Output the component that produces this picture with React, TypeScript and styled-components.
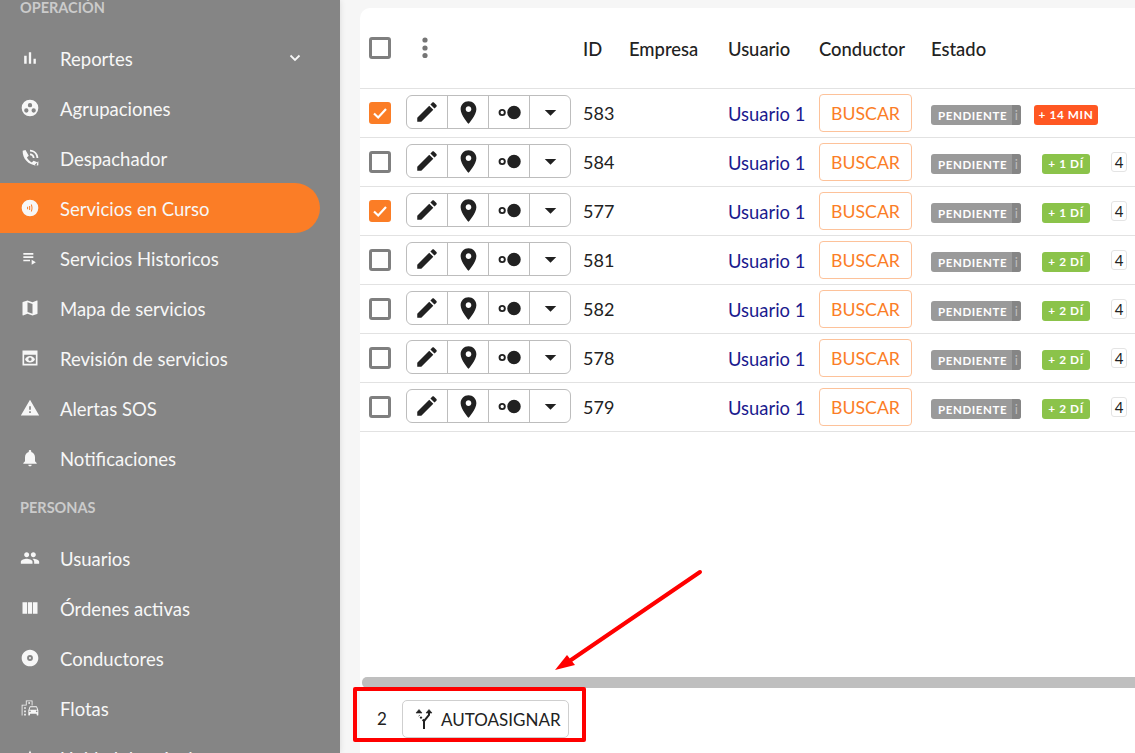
import { FC } from 'react';
import styled, { createGlobalStyle } from 'styled-components';

const FONT = '"Lato", "Noto Sans", sans-serif';

const GlobalStyle = createGlobalStyle`
  html, body {
    margin: 0;
    height: 100%;
    overflow: hidden;
    font-family: ${FONT};
  }
  * { box-sizing: border-box; }
`;

const Page = styled.div`
  position: relative;
  display: flex;
  width: 1135px;
  height: 753px;
  overflow: hidden;
  background: #f6f6f6;
`;

const Sidebar = styled.nav`
  flex: 0 0 340px;
  height: 100%;
  overflow: hidden;
  background: #858585;
  box-shadow: 0 0 6px rgba(0, 0, 0, 0.12);
`;

const SidebarList = styled.div`
  margin-top: -17px;
`;

const SectionLabel = styled.div`
  height: 50px;
  padding-left: 20px;
  line-height: 50px;
  font-size: 14.5px;
  font-weight: 700;
  color: #cbcbcb;
`;

const MenuItem = styled.div<{ $active?: boolean }>`
  display: flex;
  align-items: center;
  gap: 20px;
  width: 320px;
  height: 50px;
  padding: 0 18px 0 20px;
  border-radius: 0 25px 25px 0;
  color: #f7f7f7;
  font-size: 18.5px;
  background: ${p => (p.$active ? '#fb7d26' : 'transparent')};
  > span {
    flex: 1;
    padding-top: 2px;
  }
`;

const Main = styled.main`
  flex: 1;
  min-width: 0;
  padding: 8px 0 0 20px;
  display: flex;
`;

const Card = styled.section`
  flex: 1;
  min-width: 0;
  display: flex;
  flex-direction: column;
  background: #fff;
  border-radius: 10px 0 0 0;
  color: #222;
`;

const Row = styled.div<{ $head?: boolean }>`
  display: grid;
  grid-template-columns: 46px 177px 46px 99px 91px 112px 97px 76px 1fr;
  align-items: center;
  height: ${p => (p.$head ? '81px' : '49px')};
  border-bottom: 1px solid #e2e2e2;
  font-size: ${p => (p.$head ? '18.4px' : '18px')};
  font-weight: ${p => (p.$head ? 500 : 400)};
`;

const HeadLabel = styled.span`
  padding-top: 2px;
`;

const CheckCell = styled.div`
  padding-left: 9px;
  display: flex;
`;

const CheckBox = styled.div<{ $checked?: boolean }>`
  width: 22px;
  height: 22px;
  border-radius: 3px;
  border: 3px solid ${p => (p.$checked ? '#fb7d26' : '#7f7f7f')};
  background: ${p => (p.$checked ? '#fb7d26' : '#fff')};
  display: flex;
  align-items: center;
  justify-content: center;
`;

const ActionGroup = styled.div`
  display: flex;
  width: 165px;
  height: 34px;
  margin-top: -2px;
  border: 1px solid #bdbdbd;
  border-radius: 6px;
`;

const ActionCell = styled.div`
  flex: 1;
  display: flex;
  align-items: center;
  justify-content: center;
  border-left: 1px solid #bdbdbd;
  &:first-child { border-left: 0; }
`;

const DotsCell = styled.div`
  display: flex;
  justify-content: center;
  width: 38px;
`;

const UserLink = styled.span`
  color: #1a1a8e;
  font-size: 18.4px;
  padding-top: 2px;
`;

const SearchButton = styled.div`
  display: flex;
  align-items: center;
  justify-content: center;
  width: 93px;
  height: 38px;
  border: 1px solid #fdc29a;
  border-radius: 4px;
  color: #fb7d26;
  font-size: 17.7px;
`;

const StatusBadge = styled.div`
  display: flex;
  align-items: center;
  width: 90px;
  height: 20px;
  margin-top: 4px;
  padding-left: 7px;
  border-radius: 3px;
  background: #9a9a9a;
  color: #fff;
  font-size: 11.5px;
  font-weight: 700;
  letter-spacing: 0.6px;
  overflow: hidden;
  > span { flex: 1; }
`;

const InfoMark = styled.i`
  width: 9px;
  height: 100%;
  background: #858585;
  color: #bdbdbd;
  font-style: normal;
  font-size: 13px;
  font-weight: 400;
  line-height: 20px;
  text-align: center;
`;

const TimeCell = styled.div`
  display: flex;
  justify-content: center;
`;

const TimeBadge = styled.div<{ $late?: boolean }>`
  height: 20px;
  margin-top: 4px;
  padding: 0 ${p => (p.$late ? '5px' : '6px')};
  border-radius: 3px;
  background: ${p => (p.$late ? '#ff5722' : '#8bc34a')};
  color: #fff;
  font-size: 11.8px;
  font-weight: 700;
  letter-spacing: 0.6px;
  line-height: 20px;
  white-space: nowrap;
`;

const CountChip = styled.div`
  width: 16px;
  height: 20px;
  margin-left: 7px;
  border: 1px solid #e4e4e4;
  border-radius: 3px;
  font-size: 15px;
  line-height: 18px;
  text-align: center;
`;

const Spacer = styled.div`
  flex: 1;
`;

const ScrollBar = styled.div`
  flex: 0 0 11px;
  margin-left: 2px;
  border-radius: 5px 0 0 5px;
  background: #bfbfbf;
`;

const Footer = styled.footer`
  flex: 0 0 65px;
  display: flex;
  align-items: flex-start;
  padding: 12px 0 0 17px;
  gap: 16px;
  font-size: 17px;
`;

const SelectedCount = styled.span`
  width: 9px;
  line-height: 38px;
`;

const AssignButton = styled.div`
  display: flex;
  align-items: center;
  gap: 6px;
  width: 167px;
  height: 38px;
  padding-left: 10px;
  border: 1px solid #cfcfcf;
  border-radius: 5px;
  font-size: 17px;
`;

const Highlight = styled.div`
  position: absolute;
  left: 353px;
  top: 687px;
  width: 233px;
  height: 55px;
  border: 4px solid #f00;
  border-radius: 2px;
`;

const ArrowLayer = styled.svg`
  position: absolute;
  left: 0;
  top: 0;
  pointer-events: none;
`;

const Glyph: FC<{ d: string; size?: number; color?: string }> = ({ d, size = 20, color = '#f7f7f7' }) => (
  <svg width={size} height={size} viewBox="0 0 24 24" fill={color} fillRule="evenodd" style={{ flex: 'none' }}>
    <path d={d} />
  </svg>
);

const ICONS = {
  bars: 'M5 9.2h3V19H5zM10.6 5h2.8v14h-2.8zm5.6 8H19v6h-2.8z',
  workspaces:
    'M12 2a10 10 0 1 0 0 20 10 10 0 0 0 0-20zM12 6a2.6 2.6 0 1 1 0 5.2A2.6 2.6 0 0 1 12 6zM7.6 12.4a2.6 2.6 0 1 1 0 5.2 2.6 2.6 0 0 1 0-5.2zM16.4 12.4a2.6 2.6 0 1 1 0 5.2 2.6 2.6 0 0 1 0-5.2z',
  call:
    'M6.6 2.5 3.2 3.3C2.8 12.5 10 20.5 20 21l.8-3.8-4.6-2-2 2.2c-2.6-1.4-4.6-3.4-5.9-6l2.2-2zM12 2v2.2c4.3 0 7.8 3.4 7.8 7.8H22C22 6.5 17.500 2 12 2zM12 6.500v2.200c1.900 0 3.300 1.400 3.300 3.300h2.200c0-3-2.500-5.500-5.500-5.500zM17 21l5-.2v-5z',
  ongoing:
    'M12 2a10 10 0 1 0 0 20 10 10 0 0 0 0-20zM8.500 10.500h1.200v3H8.500zM11 9.500h1.200v5H11zM14 7.500c1.300 2.800 1.300 6.200 0 9l-1-.5c1.100-2.600 1.100-5.400 0-8z',
  playlist: 'M4 10h12v2H4zm0-4h12v2H4zm0 8h8v2H4zm10 0v6l5-3z',
  map: 'M20.5 3l-.16.03L15 5.1 9 3 3.36 4.9c-.21.07-.36.25-.36.48V20.5c0 .28.22.5.5.5l.16-.03L9 18.9l6 2.1 5.64-1.9c.21-.07.36-.25.36-.48V3.5c0-.28-.22-.5-.5-.5zM15 19l-6-2.11V5l6 2.11V19z',
  preview:
    'M3 3h18v18H3zM5 8v11h14V8zM12 9.500c2.700 0 5 1.500 6 4-1 2.500-3.300 4-6 4s-5-1.500-6-4c1-2.500 3.300-4 6-4zM12 11.500a2 2 0 1 0 0 4 2 2 0 0 0 0-4z',
  warning: 'M1 21h22L12 2 1 21zm12-3h-2v-2h2v2zm0-4h-2v-4h2v4z',
  bell: 'M12 22c1.100 0 2-.9 2-2h-4c0 1.100.89 2 2 2zm6-6v-5c0-3.070-1.640-5.640-4.500-6.320V4c0-.83-.67-1.500-1.500-1.500s-1.500.67-1.500 1.500v.68C7.630 5.360 6 7.920 6 11v5l-2 2v1h16v-1l-2-2z',
  group:
    'M16 11c1.660 0 2.990-1.340 2.990-3S17.660 5 16 5c-1.660 0-3 1.340-3 3s1.340 3 3 3zm-8 0c1.660 0 2.990-1.340 2.990-3S9.660 5 8 5C6.340 5 5 6.340 5 8s1.340 3 3 3zm0 2c-2.330 0-7 1.170-7 3.500V19h14v-2.500c0-2.330-4.670-3.500-7-3.500zm8 0c-.29 0-.62.02-.97.05 1.160.84 1.970 1.970 1.970 3.450V19h6v-2.500c0-2.330-4.670-3.500-7-3.500z',
  columns: 'M3 5h5.500v14H3zM9.500 5h5v14h-5zM15.500 5H21v14h-5.500z',
  disc: 'M12 2C6.480 2 2 6.480 2 12s4.480 10 10 10 10-4.480 10-10S17.520 2 12 2zm0 6.500a3.500 3.500 0 1 1 0 7 3.500 3.500 0 0 1 0-7zm0 2.300a1.200 1.200 0 1 0 0 2.400 1.200 1.200 0 0 0 0-2.400z',
  fleet:
    'M20.570 10.660c-.14-.4-.52-.66-.97-.66h-7.190c-.46 0-.83.26-.98.66L10 14.770l.01 5.510c0 .38.31.72.69.72h.62c.38 0 .68-.38.68-.76V19h8v1.240c0 .38.31.76.69.76h.61c.38 0 .69-.34.69-.72l.01-1.370v-4.140l-1.430-4.110zm-8.160.34h7.190l1.030 3h-9.250l1.030-3zM12 17c-.55 0-1-.45-1-1s.45-1 1-1 1 .45 1 1-.45 1-1 1zm8 0c-.55 0-1-.45-1-1s.45-1 1-1 1 .45 1 1-.45 1-1 1zM14 9h1V3H7v5H2v13h1V9h5V4h6zM5 11h2v2H5zm5-6h2v2h-2zM5 15h2v2H5zm0 4h2v2H5z',
  traffic: 'M12 3 4 20h16z',
  edit: 'M3 17.250V21h3.750L17.810 9.940l-3.750-3.750L3 17.250zM20.710 7.040c.39-.39.39-1.020 0-1.410l-2.340-2.340c-.39-.39-1.020-.39-1.410 0l-1.830 1.830 3.750 3.750 1.830-1.830z',
  pin: 'M12 2C8.130 2 5 5.130 5 9c0 5.250 7 13 7 13s7-7.750 7-13c0-3.870-3.130-7-7-7zm0 9.500c-1.380 0-2.500-1.120-2.500-2.500s1.120-2.500 2.500-2.500 2.500 1.120 2.500 2.500-1.120 2.500-2.500 2.500z',
  toggle:
    'M5.500 8.800a3.200 3.200 0 1 0 0 6.400 3.200 3.200 0 0 0 0-6.400zM5.500 10.500a1.500 1.500 0 1 1 0 3 1.500 1.500 0 0 1 0-3zM16 6a6 6 0 1 0 0 12 6 6 0 0 0 0-12z',
  caret: 'M6 9.500h12l-6 6z',
};

type MenuEntry = { label: string; icon: keyof typeof ICONS; active?: boolean; expand?: boolean };

const OPERATION_MENU: MenuEntry[] = [
  { label: 'Reportes', icon: 'bars', expand: true },
  { label: 'Agrupaciones', icon: 'workspaces' },
  { label: 'Despachador', icon: 'call' },
  { label: 'Servicios en Curso', icon: 'ongoing', active: true },
  { label: 'Servicios Historicos', icon: 'playlist' },
  { label: 'Mapa de servicios', icon: 'map' },
  { label: 'Revisión de servicios', icon: 'preview' },
  { label: 'Alertas SOS', icon: 'warning' },
  { label: 'Notificaciones', icon: 'bell' },
];

const PEOPLE_MENU: MenuEntry[] = [
  { label: 'Usuarios', icon: 'group' },
  { label: 'Órdenes activas', icon: 'columns' },
  { label: 'Conductores', icon: 'disc' },
  { label: 'Flotas', icon: 'fleet' },
  { label: 'Unidad de tránsito', icon: 'traffic' },
];

const SERVICES = [
  { id: 583, time: '+ 14 MIN', late: true, checked: true },
  { id: 584, time: '+ 1 DÍ', checked: false },
  { id: 577, time: '+ 1 DÍ', checked: true },
  { id: 581, time: '+ 2 DÍ', checked: false },
  { id: 582, time: '+ 2 DÍ', checked: false },
  { id: 578, time: '+ 2 DÍ', checked: false },
  { id: 579, time: '+ 2 DÍ', checked: false },
];

const Menu: FC<{ items: MenuEntry[] }> = ({ items }) => (
  <>
    {items.map(item => (
      <MenuItem key={item.label} $active={item.active}>
        <Glyph d={ICONS[item.icon]} />
        <span>{item.label}</span>
        {item.expand && (
          <svg width="14" height="14" viewBox="0 0 14 14" fill="none" stroke="#f7f7f7" strokeWidth="1.800">
            <path d="M2.500 4.500 7 9l4.500-4.500" />
          </svg>
        )}
      </MenuItem>
    ))}
  </>
);

const App: FC = () => (
  <Page>
    <GlobalStyle />
    <Sidebar>
      <SidebarList>
        <SectionLabel>OPERACIÓN</SectionLabel>
        <Menu items={OPERATION_MENU} />
        <SectionLabel>PERSONAS</SectionLabel>
        <Menu items={PEOPLE_MENU} />
      </SidebarList>
    </Sidebar>
    <Main>
      <Card>
        <Row $head>
          <CheckCell>
            <CheckBox />
          </CheckCell>
          <DotsCell>
            <svg width="8" height="24" viewBox="0 0 8 24" fill="#757575">
              <circle cx="4" cy="4" r="2.600" />
              <circle cx="4" cy="12" r="2.600" />
              <circle cx="4" cy="19.500" r="2.600" />
            </svg>
          </DotsCell>
          <HeadLabel>ID</HeadLabel>
          <HeadLabel>Empresa</HeadLabel>
          <HeadLabel>Usuario</HeadLabel>
          <HeadLabel>Conductor</HeadLabel>
          <HeadLabel>Estado</HeadLabel>
        </Row>
        {SERVICES.map(service => (
          <Row key={service.id}>
            <CheckCell>
              <CheckBox $checked={service.checked}>
                {service.checked && (
                  <svg width="16" height="16" viewBox="0 0 16 16" fill="none" stroke="#fff" strokeWidth="2.200">
                    <path d="M2 8.500 6.200 12.500 14 4" />
                  </svg>
                )}
              </CheckBox>
            </CheckCell>
            <ActionGroup>
              <ActionCell>
                <Glyph d={ICONS.edit} size={26} color="#212121" />
              </ActionCell>
              <ActionCell>
                <Glyph d={ICONS.pin} size={27} color="#212121" />
              </ActionCell>
              <ActionCell>
                <Glyph d={ICONS.toggle} size={27} color="#212121" />
              </ActionCell>
              <ActionCell>
                <Glyph d={ICONS.caret} size={23} color="#212121" />
              </ActionCell>
            </ActionGroup>
            <span>{service.id}</span>
            <span />
            <UserLink>Usuario 1</UserLink>
            <SearchButton>BUSCAR</SearchButton>
            <StatusBadge>
              <span>PENDIENTE</span>
              <InfoMark>i</InfoMark>
            </StatusBadge>
            <TimeCell>
              <TimeBadge $late={service.late}>{service.time}</TimeBadge>
            </TimeCell>
            {!service.late && <CountChip>4</CountChip>}
          </Row>
        ))}
        <Spacer />
        <ScrollBar />
        <Footer>
          <SelectedCount>2</SelectedCount>
          <AssignButton>
            <svg width="22" height="24" viewBox="0 0 22 24" fill="none" stroke="#212121" strokeWidth="2">
              <path d="M11 22v-8l5-6v-3" />
              <path d="M11 14 6 8.500" strokeDasharray="2 1.500" />
              <path d="M13 6l3-3.500L19 6z" fill="#212121" strokeWidth="0.600" />
              <path d="M3 6l3-3.500L9 6z" fill="#212121" strokeWidth="0.600" />
            </svg>
            AUTOASIGNAR
          </AssignButton>
        </Footer>
      </Card>
    </Main>
    <Highlight />
    <ArrowLayer width="1135" height="753">
      <path d="M700 572 571 660" stroke="#f00" strokeWidth="4" strokeLinecap="round" />
      <path d="M555 670 567 655 575 665z" fill="#f00" />
    </ArrowLayer>
  </Page>
);

export default App;
